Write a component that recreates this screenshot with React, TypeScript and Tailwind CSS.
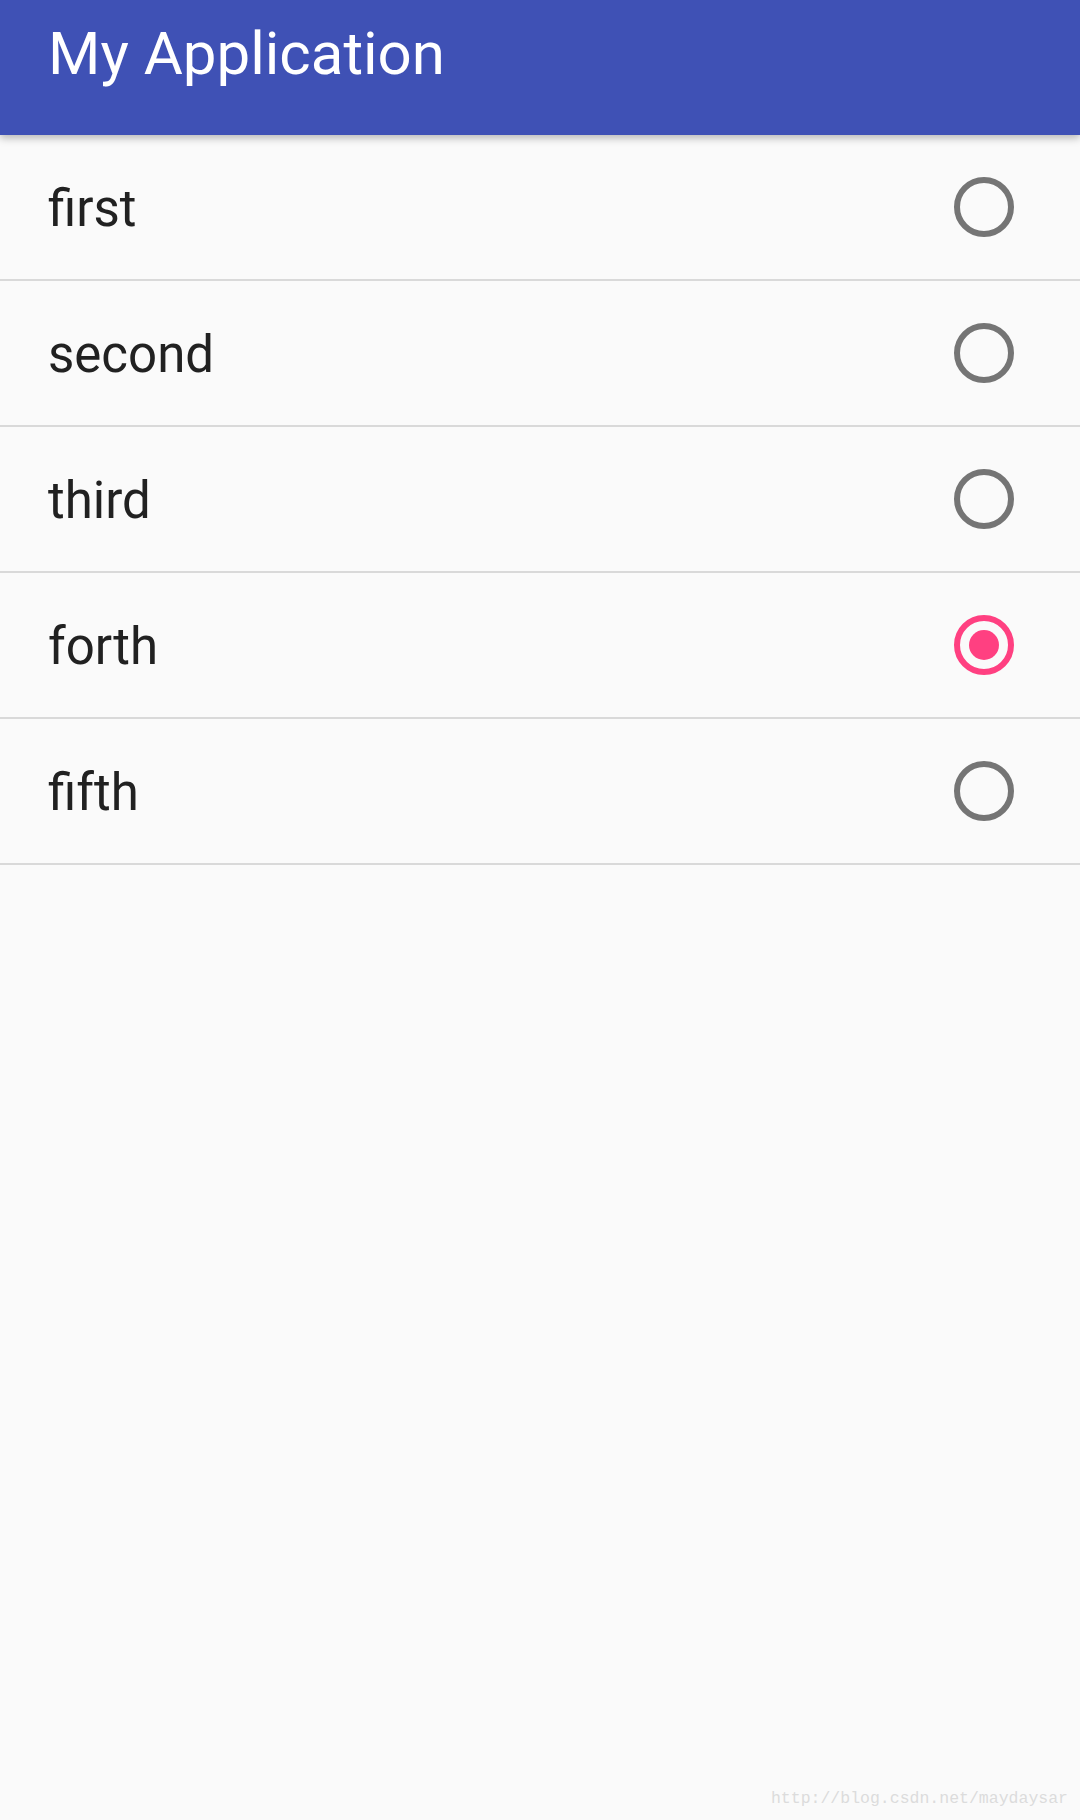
import { useState } from 'react';

const ITEMS = ['first', 'second', 'third', 'forth', 'fifth'];

function Radio({ checked }: { checked: boolean }) {
  return (
    <span
      className={`flex h-[60px] w-[60px] items-center justify-center rounded-full border-[6px] ${
        checked ? 'border-[#ff4081]' : 'border-[#757575]'
      }`}
    >
      {checked && <span className="h-[30px] w-[30px] rounded-full bg-[#ff4081]" />}
    </span>
  );
}

export default function App() {
  const [selected, setSelected] = useState(3);

  return (
    <div
      className="relative flex min-h-[1820px] flex-col bg-[#fafafa]"
      style={{ fontFamily: 'Roboto, "Noto Sans", sans-serif' }}
    >
      <header className="relative z-10 flex h-[135px] items-start bg-[#3f51b5] px-[48px] pt-[14px] shadow-[0_3px_8px_rgba(0,0,0,0.28)]">
        <h1 className="text-[60px] leading-[80px] text-white">My Application</h1>
      </header>

      <ul className="flex flex-col">
        {ITEMS.map((item, i) => (
          <li
            key={item}
            onClick={() => setSelected(i)}
            className="flex h-[146px] cursor-pointer items-center justify-between border-b-2 border-[#d9d9d9] pl-[48px] pr-[66px]"
          >
            <span className="pt-[4px] text-[51px] text-[#212121]">{item}</span>
            <Radio checked={selected === i} />
          </li>
        ))}
      </ul>

      <div
        className="absolute bottom-[8px] right-[12px] text-[16.5px] text-[#dcdcdc]"
        style={{ fontFamily: '"Liberation Mono", monospace' }}
      >
        http://blog.csdn.net/maydaysar
      </div>
    </div>
  );
}
